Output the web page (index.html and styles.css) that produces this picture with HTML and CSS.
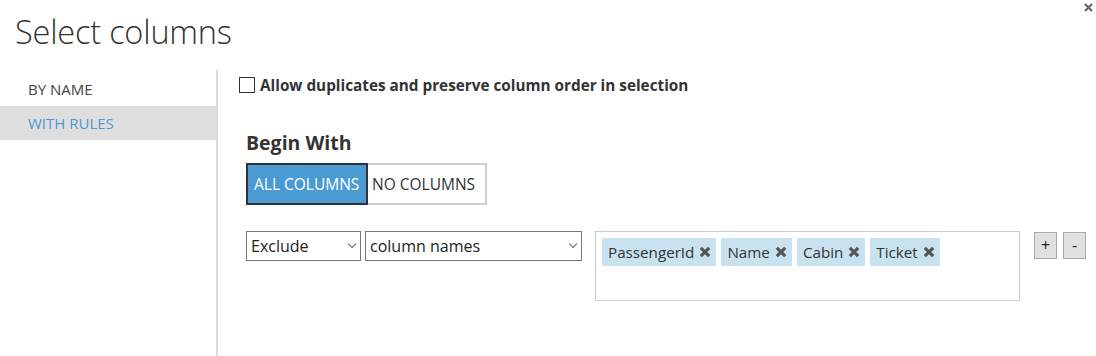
FILE: index.html
```html
<!DOCTYPE html>
<html>
<head>
<meta charset="utf-8">
<link rel="stylesheet" href="styles.css">
</head>
<body>
<div class="dialog">
  <div class="close"><svg width="9" height="9" viewBox="0 0 9 9"><path d="M1 1L8 8M8 1L1 8" stroke="#666" stroke-width="2.2"/></svg></div>
  <h1 class="title">Select columns</h1>
  <div class="main">
    <nav class="nav">
      <div class="nav-item">BY NAME</div>
      <div class="nav-item active">WITH RULES</div>
    </nav>
    <section class="content">
      <label class="dup"><span class="box"></span><span>Allow duplicates and preserve column order in selection</span></label>
      <h2 class="begin">Begin With</h2>
      <div class="toggle">
        <div class="tbtn on">ALL COLUMNS</div>
        <div class="tbtn off">NO COLUMNS</div>
      </div>
      <div class="rule">
        <div class="sel sel-a"><span>Exclude</span><span class="chev"></span></div>
        <div class="sel sel-b"><span>column names</span><span class="chev"></span></div>
        <div class="tags">
          <span class="tag">PassengerId<svg class="x" viewBox="0 0 10 10"><path d="M1.5 1.5L8.5 8.5M8.5 1.5L1.5 8.5" stroke="#555" stroke-width="2.6"/></svg></span>
          <span class="tag">Name<svg class="x" viewBox="0 0 10 10"><path d="M1.5 1.5L8.5 8.5M8.5 1.5L1.5 8.5" stroke="#555" stroke-width="2.6"/></svg></span>
          <span class="tag">Cabin<svg class="x" viewBox="0 0 10 10"><path d="M1.5 1.5L8.5 8.5M8.5 1.5L1.5 8.5" stroke="#555" stroke-width="2.6"/></svg></span>
          <span class="tag">Ticket<svg class="x" viewBox="0 0 10 10"><path d="M1.5 1.5L8.5 8.5M8.5 1.5L1.5 8.5" stroke="#555" stroke-width="2.6"/></svg></span>
        </div>
        <div class="pm">
          <div class="pbtn">+</div>
          <div class="pbtn">-</div>
        </div>
      </div>
    </section>
  </div>
</div>
</body>
</html>
```
FILE: styles.css
```css
* { box-sizing: border-box; }
html, body { margin: 0; padding: 0; background: #fff; }
body { font-family: "Open Sans", "Noto Sans", sans-serif; color: #333; width: 1096px; height: 356px; overflow: hidden; }
.dialog { position: relative; height: 356px; }
.close { position: absolute; right: 3px; top: 3px; line-height: 0; }
.title { margin: 0; padding: 9px 0 0 15px; height: 70px; font-size: 32.5px; font-weight: 300; color: #333; letter-spacing: -0.2px; }
.main { display: flex; height: 286px; }
.nav { width: 218px; border-right: 2px solid #dcdcdc; padding-top: 2px; }
.nav-item { height: 34px; line-height: 34px; padding-left: 28px; font-size: 15px; color: #444; }
.nav-item.active { background: #dedede; color: #4a9ad4; }
.content { flex: 1; padding-left: 21px; }
.dup { display: flex; align-items: center; gap: 5px; height: 18px; margin-top: 6px; font-size: 15.3px; font-weight: 700; color: #333; }
.box { width: 16px; height: 16px; border: 1px solid #333; background: #fff; flex: none; }
.begin { margin: 36px 0 0 7px; font-size: 19.5px; font-weight: 700; color: #333; height: 26px; line-height: 26px; }
.toggle { display: flex; margin: 7px 0 0 7px; }
.tbtn { height: 42px; line-height: 38px; font-size: 15.5px; white-space: nowrap; }
.tbtn.on { width: 122px; background: #4a9ad4; color: #fff; border: 2px solid #333; padding-left: 6px; }
.tbtn.off { width: 119px; border: 2px solid #ccc; border-left: none; color: #333; padding-left: 4px; }
.rule { display: flex; align-items: flex-start; margin: 26px 0 0 7px; }
.sel { height: 30px; border: 1px solid #777; display: flex; align-items: center; justify-content: space-between; padding: 0 5px 0 4px; font-size: 16px; color: #222; }
.sel-a { width: 115px; }
.sel-b { width: 217px; margin-left: 4px; }
.chev { width: 6px; height: 6px; border-right: 1px solid #555; border-bottom: 1px solid #555; transform: rotate(45deg) translateY(-3px); margin-right: 2px; }
.tags { width: 425px; height: 70px; margin-left: 13px; border: 1px solid #ccc; padding: 6px; display: flex; align-items: flex-start; gap: 5px; }
.tag { height: 28px; background: #c9e2ef; padding: 0 5px 0 6px; font-size: 15.2px; color: #333; white-space: nowrap; display: flex; align-items: center; gap: 5px; }
.x { width: 12px; height: 12px; }
.pm { display: flex; gap: 6px; margin-left: 14px; margin-top: 1px; }
.pbtn { width: 23px; height: 27px; background: #e0e0e0; border: 1px solid #aaa; text-align: center; line-height: 24px; font-size: 16px; color: #222; }
```
